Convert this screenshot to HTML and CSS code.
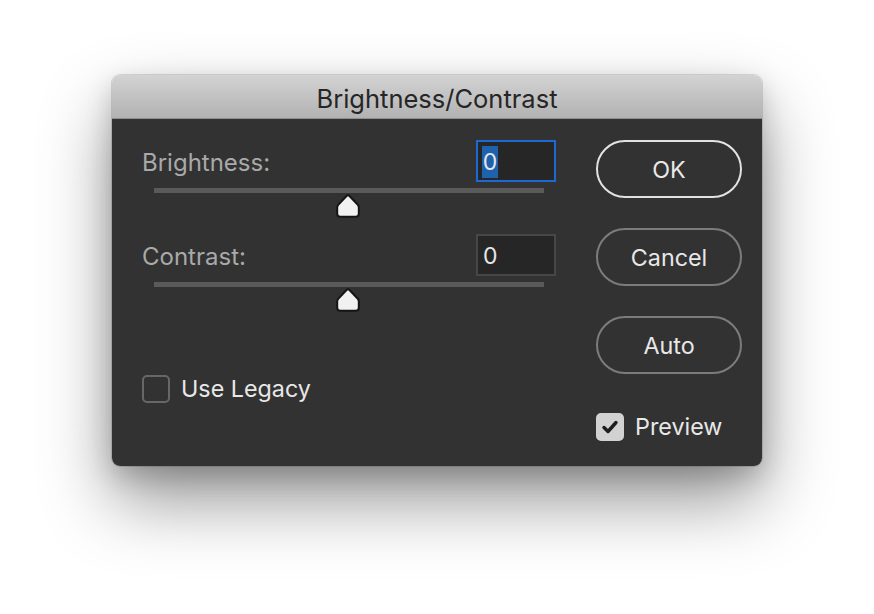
FILE: index.html
```html
<!DOCTYPE html>
<html lang="en">
<head>
    <meta charset="UTF-8">
    <meta name="viewport" content="width=device-width, initial-scale=1.0">
    <title>Brightness/Contrast</title>
    <link rel="stylesheet" href="styles.css">
</head>
<body>
    <div class="stage">
        <div class="dialog">
            <div class="titlebar">Brightness/Contrast</div>
            <div class="content">
                <div class="controls">
                    <div class="field">
                        <label for="brightness">Brightness:</label>
                        <div class="value focused" id="brightness"><span class="selected">0</span></div>
                    </div>
                    <div class="slider">
                        <div class="track">
                            <svg class="thumb" width="24" height="24" viewBox="0 0 24 24"><path d="M12 1.2 Q12.8 1.2 13.5 2 L21.8 10.8 Q22.8 11.9 22.8 13.5 V19.8 Q22.8 22.8 19.8 22.8 H4.2 Q1.2 22.8 1.2 19.8 V13.5 Q1.2 11.9 2.2 10.8 L10.5 2 Q11.2 1.2 12 1.2 Z" fill="#f1f1f1" stroke="#151515" stroke-width="2"/></svg>
                        </div>
                    </div>

                    <div class="field">
                        <label for="contrast">Contrast:</label>
                        <div class="value" id="contrast">0</div>
                    </div>
                    <div class="slider">
                        <div class="track">
                            <svg class="thumb" width="24" height="24" viewBox="0 0 24 24"><path d="M12 1.2 Q12.8 1.2 13.5 2 L21.8 10.8 Q22.8 11.9 22.8 13.5 V19.8 Q22.8 22.8 19.8 22.8 H4.2 Q1.2 22.8 1.2 19.8 V13.5 Q1.2 11.9 2.2 10.8 L10.5 2 Q11.2 1.2 12 1.2 Z" fill="#f1f1f1" stroke="#151515" stroke-width="2"/></svg>
                        </div>
                    </div>

                    <div class="check legacy">
                        <span class="box"></span>
                        <span>Use Legacy</span>
                    </div>
                </div>

                <div class="actions">
                    <button class="btn default">OK</button>
                    <button class="btn">Cancel</button>
                    <button class="btn">Auto</button>
                    <div class="check preview">
                        <span class="box checked">
                            <svg width="20" height="20" viewBox="0 0 20 20"><path d="M4 10.5 L8 14.5 L16 5.5" fill="none" stroke="#1e1e1e" stroke-width="3.4" stroke-linecap="round" stroke-linejoin="round"/></svg>
                        </span>
                        <span>Preview</span>
                    </div>
                </div>
            </div>
        </div>
    </div>
</body>
</html>
```

FILE: styles.css
```css
/* Photoshop style dialog */
body {
    margin: 0;
    background: #ffffff;
    font-family: Inter, "Noto Sans", sans-serif;
}
.stage {
    height: 614px;
    box-sizing: border-box;
    padding: 75px 0 0 112px;
}
.dialog {
    width: 650px;
    height: 391px;
    border-radius: 8px;
    overflow: hidden;
    display: flex;
    flex-direction: column;
    box-shadow: 0 0 0 1px rgba(0, 0, 0, 0.12), 0 34px 70px rgba(0, 0, 0, 0.42), 0 10px 26px rgba(0, 0, 0, 0.18);
}
.titlebar {
    height: 43px;
    line-height: 47px;
    text-align: center;
    font-size: 25.5px;
    color: #262626;
    background: linear-gradient(#d3d3d3, #b2b2b2);
    border-bottom: 1px solid #8e8e8e;
}
.content {
    flex: 1;
    background: #323232;
    display: flex;
    padding: 21px 0 0 30px;
}
.controls {
    width: 414px;
}
.field {
    display: flex;
    justify-content: space-between;
    align-items: center;
    height: 42px;
}
.field label {
    font-size: 24px;
    color: #a9a9a9;
    padding-top: 3px;
}
.value {
    box-sizing: border-box;
    width: 80px;
    height: 42px;
    display: flex;
    align-items: center;
    padding: 1px 0 0 5px;
    background: #262626;
    border: 2px solid #474747;
    color: #e6e6e6;
    font-size: 23px;
}
.value.focused {
    border-color: #1b6ad4;
    padding-left: 4px;
}
.selected {
    display: inline-block;
    width: 16px;
    height: 32px;
    line-height: 33px;
    text-align: center;
    background: #1e62ad;
}
.slider {
    height: 52px;
    padding: 6px 12px 0;
    box-sizing: border-box;
}
.track {
    position: relative;
    height: 5px;
    background: #5a5a5a;
}
.thumb {
    position: absolute;
    left: 50%;
    top: 6px;
    margin-left: -13px;
}
.check {
    display: flex;
    align-items: center;
    font-size: 23.3px;
    color: #e8e8e8;
}
.box {
    box-sizing: border-box;
    width: 28px;
    height: 28px;
    margin-right: 11px;
    border: 2px solid #676767;
    border-radius: 5px;
    display: flex;
    align-items: center;
    justify-content: center;
}
.box.checked {
    background: #d2d2d2;
    border-color: #d2d2d2;
}
.legacy {
    margin-top: 46px;
}
.actions {
    margin-left: 40px;
    width: 146px;
    display: flex;
    flex-direction: column;
    gap: 30px;
}
.btn {
    box-sizing: border-box;
    width: 146px;
    height: 58px;
    border-radius: 29px;
    border: 2px solid #7c7c7c;
    background: transparent;
    color: #e8e8e8;
    font-family: inherit;
    font-size: 23.3px;
    padding: 0;
}
.btn.default {
    border-color: #e2e2e2;
}
.preview {
    margin-top: 8px;
}
```
